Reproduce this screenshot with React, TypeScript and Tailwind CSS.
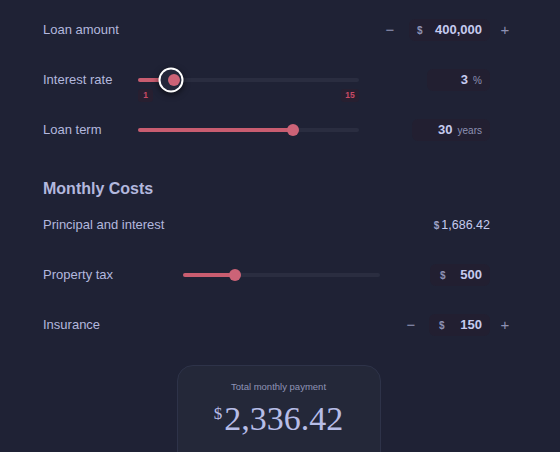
import React from "react";

const sans = { fontFamily: '"Liberation Sans", Arial, sans-serif' };

function Track({ width, pos, ring = false, badges = false }: { width: number; pos: number; ring?: boolean; badges?: boolean }) {
  return (
    <div className="relative h-[4px] rounded-full bg-[#2a2d40]" style={{ width }}>
      <div className="absolute left-0 top-0 h-[4px] rounded-full bg-[#c95d70]" style={{ width: pos }} />
      {ring && (
        <div
          className="absolute top-1/2 h-[25px] w-[25px] -translate-x-1/2 -translate-y-1/2 rounded-full border-[2.5px] border-white bg-[#24273a] shadow-[0_2px_6px_rgba(0,0,0,0.6)]"
          style={{ left: pos - 3.5 }}
        />
      )}
      <div
        className="absolute top-1/2 h-[12px] w-[12px] -translate-x-1/2 -translate-y-1/2 rounded-full bg-[#cc6377]"
        style={{ left: pos }}
      />
      {badges && (
        <>
          <div className="absolute left-0 top-[11px] flex h-[13px] w-[15px] items-center justify-center rounded-[3px] bg-[#271f30] text-[8.5px] font-bold text-[#c84a66]">
            1
          </div>
          <div className="absolute right-0 top-[11px] flex h-[13px] w-[18px] items-center justify-center rounded-[3px] bg-[#271f30] text-[8.5px] font-bold text-[#c84a66]">
            15
          </div>
        </>
      )}
    </div>
  );
}

function Box({ width, children }: { width: number; children: React.ReactNode }) {
  return (
    <div className="flex h-[22px] items-center rounded-[6px] bg-[#221f31] px-2" style={{ width }}>
      {children}
    </div>
  );
}

function Plus({ show }: { show: boolean }) {
  return (
    <div className="ml-[3px] flex w-[24px] items-center justify-center text-[15px] text-[#8e92b4]">
      {show ? "+" : ""}
    </div>
  );
}

export default function App() {
  return (
    <div className="h-[452px] w-[560px] overflow-hidden bg-[#1f2235] pl-[43px] pr-[43px] pt-[5px]" style={sans}>
      {/* Loan amount */}
      <div className="flex h-[50px] items-center">
        <div className="text-[13px] text-[#b3b8de]">Loan amount</div>
        <div className="ml-auto flex items-center">
          <div className="mr-[7px] flex w-[24px] items-center justify-center text-[15px] text-[#8e92b4]">−</div>
          <Box width={81}>
            <span className="text-[10px] font-bold text-[#8e92b4]">$</span>
            <span className="ml-auto text-[13px] font-bold text-[#c6cbef]">400,000</span>
          </Box>
          <Plus show />
        </div>
      </div>

      {/* Interest rate */}
      <div className="flex h-[50px] items-center">
        <div className="w-[95px] text-[13px] text-[#b3b8de]">Interest rate</div>
        <Track width={221} pos={36} ring badges />
        <div className="ml-auto flex items-center">
          <Box width={63}>
            <span className="ml-auto text-[13px] font-bold text-[#c6cbef]">3</span>
            <span className="ml-[5px] text-[10px] text-[#8e92b4]">%</span>
          </Box>
          <Plus show={false} />
        </div>
      </div>

      {/* Loan term */}
      <div className="flex h-[50px] items-center">
        <div className="w-[95px] text-[13px] text-[#b3b8de]">Loan term</div>
        <Track width={221} pos={155} />
        <div className="ml-auto flex items-center">
          <Box width={78}>
            <span className="ml-auto text-[13px] font-bold text-[#c6cbef]">30</span>
            <span className="ml-[5px] text-[10px] text-[#8e92b4]">years</span>
          </Box>
          <Plus show={false} />
        </div>
      </div>

      {/* Monthly Costs */}
      <div className="mt-[23px] flex h-[22px] items-center text-[16px] font-bold text-[#b3b8de]">Monthly Costs</div>

      {/* Principal */}
      <div className="flex h-[50px] items-center">
        <div className="text-[13px] text-[#b3b8de]">Principal and interest</div>
        <div className="ml-auto flex items-center">
          <div className="flex items-baseline">
            <span className="mr-[2px] text-[10px] font-bold text-[#9ea3c8]">$</span>
            <span className="text-[12.5px] text-[#c6cbef]">1,686.42</span>
          </div>
          <Plus show={false} />
        </div>
      </div>

      {/* Property tax */}
      <div className="flex h-[50px] items-center">
        <div className="w-[140px] text-[13px] text-[#b3b8de]">Property tax</div>
        <Track width={197} pos={52} />
        <div className="ml-auto flex items-center">
          <Box width={60}>
            <span className="ml-[2px] text-[10px] font-bold text-[#8e92b4]">$</span>
            <span className="ml-auto text-[13px] font-bold text-[#c6cbef]">500</span>
          </Box>
          <Plus show={false} />
        </div>
      </div>

      {/* Insurance */}
      <div className="flex h-[50px] items-center">
        <div className="text-[13px] text-[#b3b8de]">Insurance</div>
        <div className="ml-auto flex items-center">
          <div className="mr-[6px] flex w-[24px] items-center justify-center text-[15px] text-[#8e92b4]">−</div>
          <Box width={61}>
            <span className="ml-[2px] text-[10px] font-bold text-[#8e92b4]">$</span>
            <span className="ml-auto text-[13px] font-bold text-[#c6cbef]">150</span>
          </Box>
          <Plus show />
        </div>
      </div>

      {/* Total card */}
      <div className="mt-[15px] flex justify-center pr-[3px]">
        <div className="h-[120px] w-[204px] rounded-[16px] border border-[#2e3349] bg-[#242839] pt-[14px]">
          <div className="text-center text-[9.5px] text-[#8f94b6]">Total monthly payment</div>
          <div className="mt-[6px] flex justify-center text-[#b7bde7]" style={{ fontFamily: '"Liberation Serif", "Times New Roman", serif' }}>
            <span className="mr-[2px] mt-[5px] text-[17px] leading-none">$</span>
            <span className="text-[34px] leading-[38px]">2,336.42</span>
          </div>
        </div>
      </div>
    </div>
  );
}
